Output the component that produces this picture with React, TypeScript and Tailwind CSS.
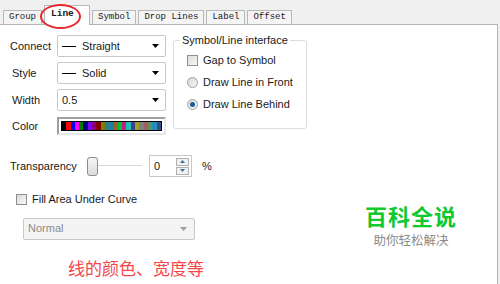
import React from 'react';

const tabs = ['Group', 'Line', 'Symbol', 'Drop Lines', 'Label', 'Offset'];

const palette = [
    '#000000', '#ff0000', '#0000ff', '#ff00ff', '#008000', '#000080', '#8000ff', '#800080',
    '#800000', '#808000', '#2a7f8f', '#2080a0', '#a06020', '#00c040', '#c02080', '#20c0c0',
    '#404090', '#a0a020', '#808080', '#a06060', '#609060', '#2090c0', '#305080',
];

const Caret: React.FC<{ light?: boolean }> = ({ light }) => (
    <svg width="7" height="4" viewBox="0 0 7 4" className="ml-auto">
        <path d="M0 0h7L3.5 4z" fill={light ? '#a0a0a0' : '#000'} />
    </svg>
);

const Select: React.FC<{ dash?: boolean; text: string }> = ({ dash, text }) => (
    <div className="flex items-center w-[109px] h-[22px] border border-[#c8c8c8] rounded-[2px] bg-white pl-[4px] pr-[6px]">
        {dash && <span className="w-[14px] h-px bg-black mr-[6px]" />}
        <span>{text}</span>
        <Caret />
    </div>
);

const Check: React.FC = () => (
    <span className="w-[11px] h-[11px] border border-[#8e8f8f] bg-gradient-to-br from-[#dcdcdc] to-[#f8f8f8] shrink-0" />
);

const Radio: React.FC<{ on?: boolean }> = ({ on }) => (
    <span className="w-[11px] h-[11px] rounded-full border border-[#a0a0a0] bg-gradient-to-br from-[#d8d8d8] to-[#f6f6f6] flex items-center justify-center shrink-0">
        {on && <span className="w-[5px] h-[5px] rounded-full bg-[#1e5f9a]" />}
    </span>
);

const App: React.FC = () => {
    return (
        <div className="relative w-[500px] h-[284px] overflow-hidden bg-[#f0f0f0] text-[11px] text-[#1a1a1a] whitespace-nowrap" style={{ fontFamily: '"Liberation Sans", Arial, sans-serif' }}>
            {/* tab strip */}
            <div className="flex items-end h-[24px] pl-[3px] gap-[2px]" style={{ fontFamily: '"Liberation Mono", monospace' }}>
                {tabs.map(t => t === 'Line' ? (
                    <div key={t} className="h-[20px] px-[6px] pt-[2px] bg-white border border-b-0 border-[#b8b8b8] font-bold text-[9.5px] leading-[12px] -mb-px relative z-10 w-[46px]">{t}</div>
                ) : (
                    <div key={t} className="h-[14px] px-[5px] bg-[#f4f4f4] border border-b-0 border-[#b8b8b8] text-[9px] leading-[13px] flex items-center">{t}</div>
                ))}
            </div>

            {/* red circle */}
            <div className="absolute left-[40px] top-[4px] w-[41px] h-[25px] rounded-[50%] border-2 border-[#e8252a] z-20" />

            {/* panel */}
            <div className="w-[498px] h-[260px] bg-white border-t border-r border-[#b4b4b4]">
                <div className="flex pt-[10px]">
                    <div className="flex flex-col gap-[5px] pl-[10px]">
                        <div className="flex items-center"><span className="w-[47px]">Connect</span><Select dash text="Straight" /></div>
                        <div className="flex items-center"><span className="w-[47px] pl-[2px]">Style</span><Select dash text="Solid" /></div>
                        <div className="flex items-center"><span className="w-[47px] pl-[2px]">Width</span><Select text="0.5" /></div>
                        <div className="flex items-center mt-[1px]">
                            <span className="w-[47px] pl-[2px]">Color</span>
                            <div className="w-[109px] h-[18px] border-2 border-[#a0a0a0] border-b-[#e8e8e8] border-r-[#e8e8e8] p-[2px] flex">
                                <div className="flex flex-1 border border-black">
                                    {palette.map((c, i) => <span key={i} className="flex-1 h-full" style={{ background: c }} />)}
                                </div>
                            </div>
                        </div>
                    </div>

                    <fieldset className="ml-[7px] -mt-[3px] w-[133px] h-[97px] border border-[#d5dfe5] rounded-[3px] px-[13px] pt-[2px]">
                        <legend className="px-[2px] -ml-[7px]">Symbol/Line interface</legend>
                        <div className="flex flex-col gap-[7px] mt-[2px]">
                            <label className="flex items-center gap-[5px] leading-[15px]"><Check />Gap to Symbol</label>
                            <label className="flex items-center gap-[5px] leading-[15px]"><Radio />Draw Line in Front</label>
                            <label className="flex items-center gap-[5px] leading-[15px]"><Radio on />Draw Line Behind</label>
                        </div>
                    </fieldset>
                </div>

                <div className="flex items-center mt-[20px] pl-[10px]">
                    <span className="w-[77px]">Transparency</span>
                    <div className="relative flex items-center w-[55px] h-[20px]">
                        <span className="absolute left-0 right-0 top-[9px] h-[2px] bg-[#d6d6d6] border-b border-white" />
                        <span className="relative w-[11px] h-[19px] rounded-[3px] border border-[#8c8c8c] bg-gradient-to-b from-[#f6f6f6] to-[#dcdcdc]" />
                    </div>
                    <div className="flex items-center ml-[7px] w-[43px] h-[22px] border border-[#c8c8c8] bg-white pl-[4px]">
                        <span>0</span>
                        <div className="ml-auto mr-[2px] flex flex-col gap-px">
                            <span className="w-[13px] h-[8px] border border-[#b0b0b0] bg-[#eef2f6] flex items-center justify-center">
                                <svg width="5" height="3"><path d="M0 3h5L2.5 0z" fill="#4a6a8a" /></svg>
                            </span>
                            <span className="w-[13px] h-[8px] border border-[#b0b0b0] bg-[#eef2f6] flex items-center justify-center">
                                <svg width="5" height="3"><path d="M0 0h5L2.5 3z" fill="#4a6a8a" /></svg>
                            </span>
                        </div>
                    </div>
                    <span className="ml-[10px]">%</span>
                </div>

                <div className="flex items-start">
                    <div className="flex flex-col">
                        <label className="flex items-center gap-[5px] mt-[14px] pl-[16px]"><Check />Fill Area Under Curve</label>
                        <div className="flex items-center ml-[23px] mt-[10px] w-[172px] h-[22px] border border-[#c8c8c8] rounded-[2px] bg-[#f4f4f4] pl-[4px] pr-[7px] text-[#8a8a8a]">
                            <span>Normal</span>
                            <Caret light />
                        </div>
                        <div className="ml-[68px] mt-[18px] text-[17px] text-[#f4464b] leading-[20px]" style={{ fontFamily: '"Noto Sans CJK SC", sans-serif' }}>线的颜色、宽度等</div>
                    </div>
                    <div className="flex flex-col items-center ml-[161px] mt-[25px]" style={{ fontFamily: '"Noto Sans CJK SC", sans-serif' }}>
                        <span className="text-[22px] font-bold text-[#10c830] leading-[26px] tracking-[1px]">百科全说</span>
                        <span className="text-[12.5px] text-[#8a8a8a] leading-[16px] mt-[4px]">助你轻松解决</span>
                    </div>
                </div>
            </div>
        </div>
    );
};

export default App;
